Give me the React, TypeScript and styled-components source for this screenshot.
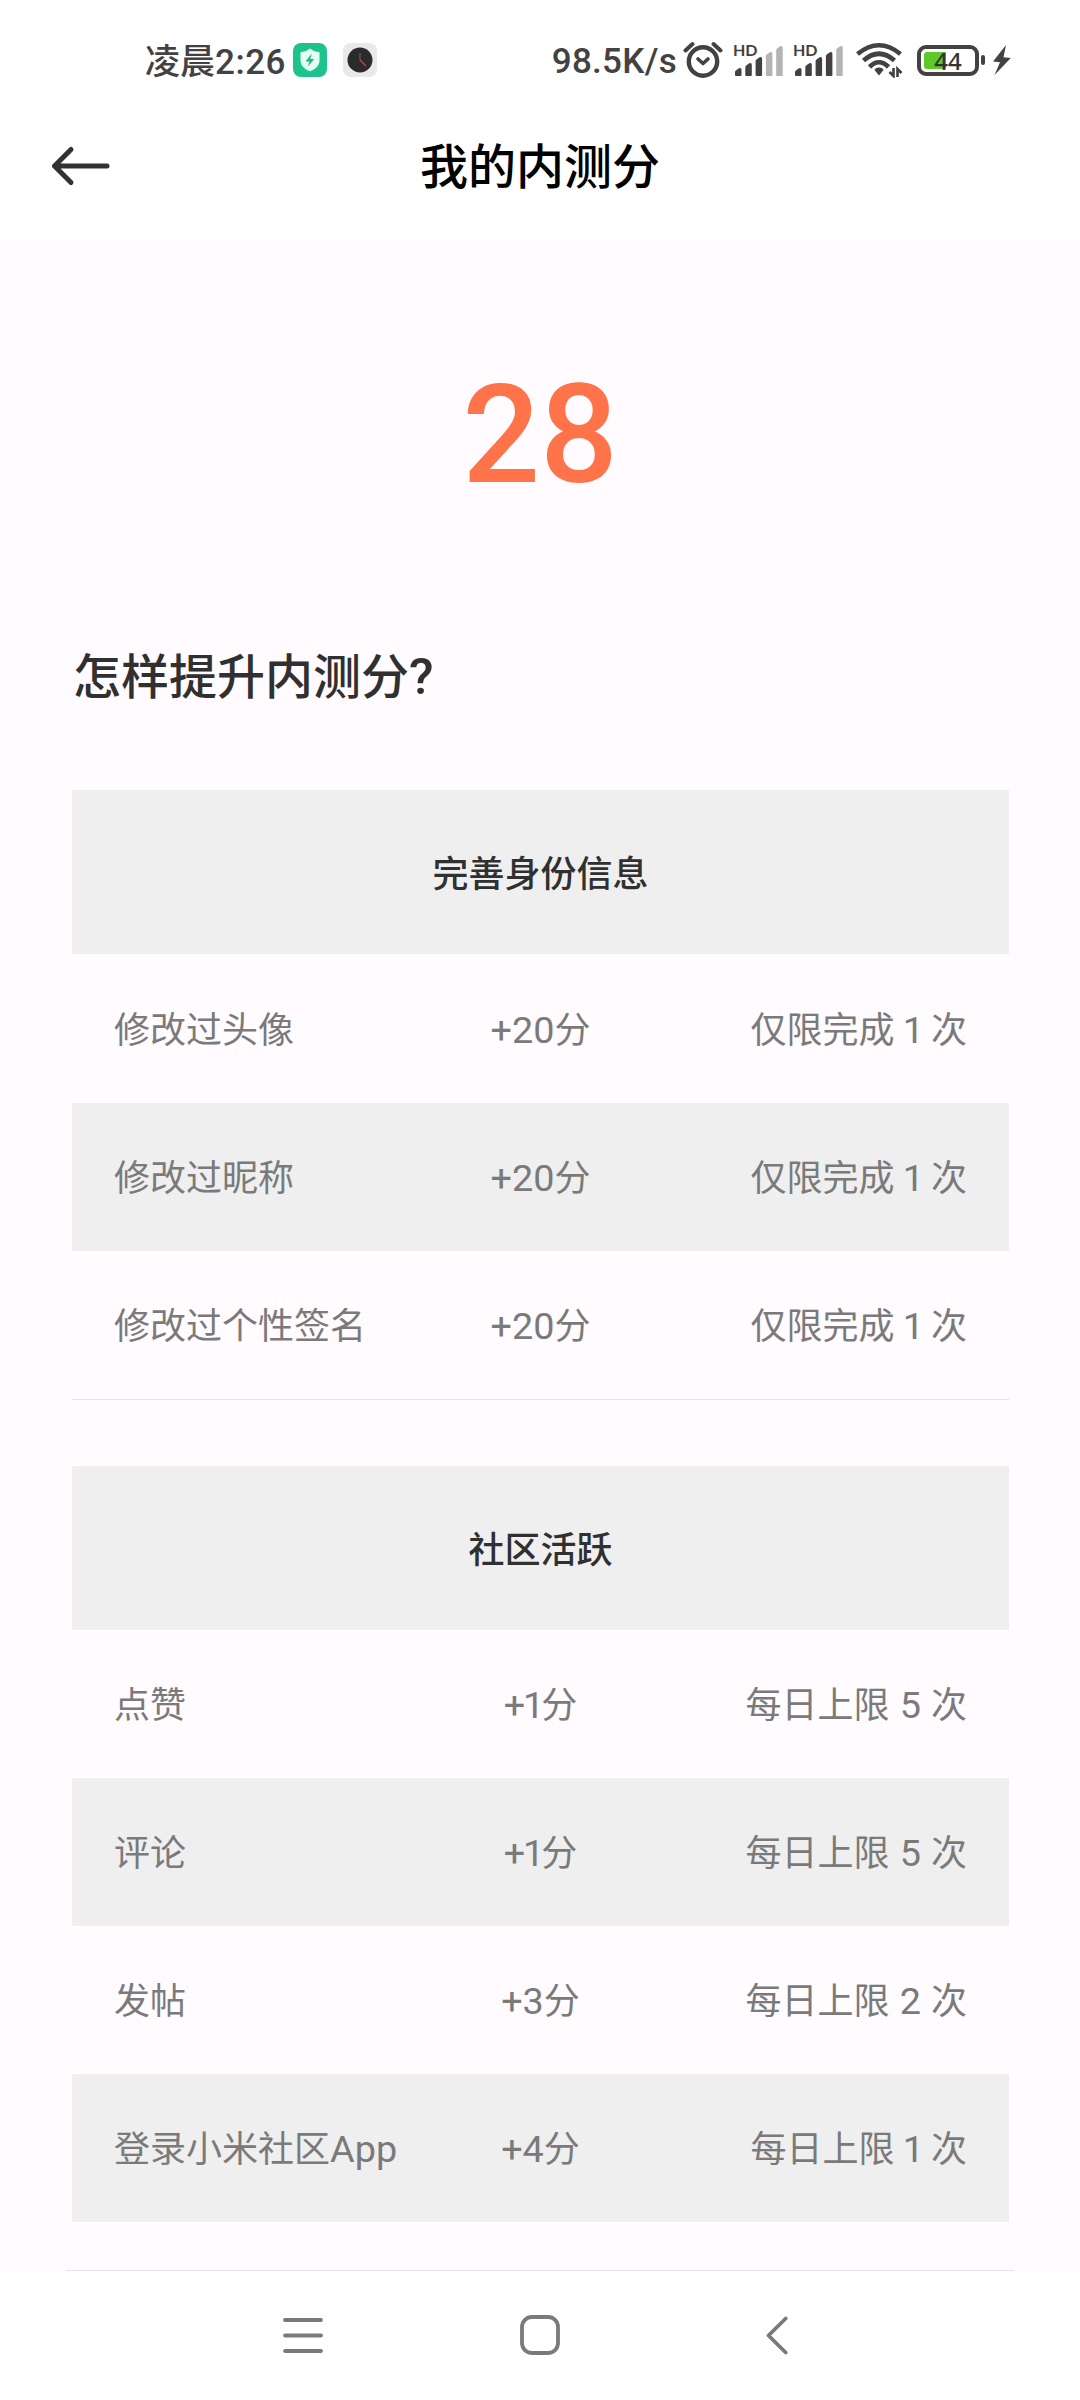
import React from 'react';
import styled, { createGlobalStyle } from 'styled-components';

const Global = createGlobalStyle`
  * { box-sizing: border-box; }
  html, body { margin: 0; background: #ffffff; }
  svg { display: block; flex: none; }
`;

const Screen = styled.div`
  display: flex;
  flex-direction: column;
  width: 1080px;
  height: 2400px;
  overflow: hidden;
  background: #ffffff;
  font-family: 'Noto Sans CJK SC', sans-serif;
  color: #303030;
`;

const StatusBar = styled.header`
  display: flex;
  align-items: center;
  height: 120px;
  padding: 0 69px 0 145px;
  font-size: 35px;
  line-height: 40px;
  font-weight: 500;
  color: #424242;
  white-space: nowrap;
`;

const Clock = styled.span`
  width: 148px;
  padding-bottom: 2px;
`;

const Spacer = styled.span`
  flex: 1;
`;

const Speed = styled.span`
  display: flex;
  justify-content: flex-end;
  margin-right: 6px;
  padding-top: 2px;
`;

const Latin = styled.span<{ $size?: number; $spacing?: number }>`
  font-family: Roboto, 'Noto Sans CJK SC', sans-serif;
  font-size: ${p => p.$size ?? 1.05}em;
  letter-spacing: ${p => p.$spacing ?? 0}px;
  line-height: 1;
`;

const NarrowOne = styled(Latin)`
  margin: 0 -3px 0 -2px;
`;

const TitleBar = styled.div`
  display: grid;
  grid-template-columns: 160px 1fr 160px;
  align-items: center;
  height: 120px;
  padding-bottom: 28px;
`;

const BackButton = styled.button`
  border: 0;
  background: none;
  padding: 0 0 0 50px;
`;

const Title = styled.h1`
  margin: 0;
  padding-bottom: 7px;
  text-align: center;
  font-size: 48px;
  line-height: 60px;
  font-weight: 500;
  color: #000000;
`;

const Content = styled.main`
  display: flex;
  flex-direction: column;
  height: 2030px;
  background: #fffbff;
  overflow: hidden;
`;

const Score = styled.div`
  height: 386px;
  flex: none;
  padding-top: 115px;
  text-align: center;
  font-family: Roboto, sans-serif;
  font-size: 137px;
  line-height: 160px;
  font-weight: 500;
  color: #ff734b;
`;

const Question = styled.h2`
  margin: 0 0 0 73px;
  height: 164px;
  flex: none;
  padding-top: 17px;
  font-size: 48px;
  line-height: 60px;
  font-weight: 500;
`;

const Table = styled.section<{ $gap: number }>`
  width: 937px;
  margin: 0 0 66px 72px;
  display: flex;
  flex-direction: column;
  flex: none;
  & > :first-child { margin-bottom: ${p => p.$gap}px; }
`;

const TableHead = styled.h3`
  margin: 0;
  height: 164px;
  padding-bottom: 2px;
  display: flex;
  align-items: center;
  justify-content: center;
  background: #efefef;
  font-size: 36px;
  line-height: 54px;
  font-weight: 500;
`;

const Row = styled.div<{ $shaded: boolean }>`
  display: grid;
  grid-template-columns: 1fr 180px 1fr;
  align-items: center;
  height: 148px;
  padding: 0 42px 4px;
  background: ${p => (p.$shaded ? '#efefef' : 'transparent')};
  font-size: 36px;
  line-height: 54px;
  color: #7a7a7a;
  white-space: nowrap;
`;

const Cell = styled.span<{ $align?: string }>`
  text-align: ${p => p.$align ?? 'left'};
  word-spacing: 2px;
`;

const TableEnd = styled.div`
  height: 1px;
  background: #e4e2e5;
`;

const NavDivider = styled.div`
  height: 1px;
  margin: 0 66px;
  background: #e6e2e6;
`;

const NavBar = styled.nav`
  display: flex;
  justify-content: center;
  gap: 197px;
  padding-top: 44px;
`;

/* Splits a label into CJK and Latin runs so digits get their own face. */
const Mixed = ({ text, size, spacing }: { text: string; size?: number; spacing?: number }) => (
  <>
    {text.split(/(1|[A-Za-z02-9+?:./]+)/).map((part, i) => {
      if (i % 2 === 0) return part;
      const Run = part === '1' ? NarrowOne : Latin;
      return <Run key={i} $size={size} $spacing={spacing}>{part}</Run>;
    })}
  </>
);

const ShieldApp = () => (
  <svg width="34" height="34" viewBox="0 0 34 34">
    <rect width="34" height="34" rx="8" fill="#1cc48b" />
    <path d="M17 5.5c3 2.4 6 3.4 9.5 3.7v8.3c0 5.200-4 8.800-9.500 10.800-5.500-2-9.500-5.600-9.500-10.800V9.200C11 8.900 14 7.900 17 5.500z" fill="#e4fff4" />
    <path d="M18.800 10.500l-6.300 8h3.900l-1.400 5 6.200-7.500h-4z" fill="#1cb583" />
  </svg>
);

const ClockApp = () => (
  <svg width="34" height="34" viewBox="0 0 34 34">
    <rect width="34" height="34" rx="8" fill="#ebe8e9" />
    <circle cx="17" cy="17" r="12.500" fill="#2b2b2b" />
    <path d="M17 10v7" stroke="#555" strokeWidth="1.500" />
    <path d="M17 17l6 6" stroke="#b5483f" strokeWidth="1.500" />
  </svg>
);

const Alarm = () => (
  <svg width="40" height="38" viewBox="0 0 40 38" fill="none" stroke="#424242" strokeLinecap="round" strokeLinejoin="round">
    <circle cx="20" cy="20.500" r="14.200" strokeWidth="4.400" />
    <path d="M15 18l5 4.500 5-4.500" strokeWidth="3.600" />
    <path d="M2.500 9.500l7-6.500M37.500 9.500l-7-6.500" strokeWidth="4" />
  </svg>
);

const SignalBox = styled.span`
  position: relative;
  width: 50px;
  height: 34px;
`;

const HdTag = styled.span`
  position: absolute;
  left: 0;
  top: -2px;
  font: 700 16px/17px Lato, sans-serif;
`;

const Signal = ({ strong }: { strong: number }) => (
  <SignalBox>
    <HdTag>HD</HdTag>
    <svg width="50" height="34" viewBox="0 0 50 34">
      {[8, 13, 19, 24, 30].map((h, i) => (
        <path
          key={h}
          d={`M${2 + i * 10.300} ${33 - h + 4} q0 -1 1.500 -2 l2.500 -1.700 q2.500 -.8 2.500 1.500 V32 q0 1 -1 1 h-4.500 q-1 0 -1 -1z`}
          fill={i < strong ? '#424242' : '#b5b3b5'}
        />
      ))}
    </svg>
  </SignalBox>
);

const Wifi = () => (
  <svg width="47" height="36" viewBox="0 0 47 36" fill="none" stroke="#424242" strokeWidth="4.600">
    <path d="M1.500 12Q23 -5.500 44.500 12" />
    <path d="M7.500 18.500Q23 5 38.500 18.500" />
    <path d="M13.500 25Q23 15.500 32.500 25" />
    <path d="M23 25.500c2.600 0 4 1 4.500 2.500L23 33.500l-4.500-5.500c.5-1.500 2-2.500 4.500-2.500z" fill="#424242" stroke="none" />
    <path d="M37.500 26v8l-4-4M41.500 35v-8l4 4" strokeWidth="2.600" />
  </svg>
);

const BatteryShell = styled.span`
  position: relative;
  width: 62px;
  height: 31px;
  border: 4.500px solid #424242;
  border-radius: 9px;
  padding: 3px;
  display: flex;
`;

const BatteryFill = styled.span`
  width: 22px;
  border-radius: 3px 0 0 3px;
  background: #5fc726;
`;

const BatteryText = styled.span`
  position: absolute;
  inset: 0;
  text-align: center;
  font: 500 24px/23px 'Noto Sans', sans-serif;
  color: #333333;
`;

const BatteryTip = styled.span`
  width: 4px;
  height: 10px;
  margin: 0 8px 0 2px;
  border-radius: 2px;
  background: #424242;
`;

const Bolt = () => (
  <svg width="18" height="30" viewBox="0 0 18 30">
    <path d="M13 0L0 16.500l7 .8-5.500 12.700L17.800 13 10.500 12.200z" fill="#424242" />
  </svg>
);

const Icons = styled.span<{ $gap: number; $left?: number }>`
  display: flex;
  align-items: center;
  gap: ${p => p.$gap}px;
  margin-left: ${p => p.$left ?? 0}px;
`;

interface Rule { name: string; points: string; limit: string }

const profileRules: Rule[] = [
  { name: '修改过头像', points: '+20分', limit: '仅限完成 1 次' },
  { name: '修改过昵称', points: '+20分', limit: '仅限完成 1 次' },
  { name: '修改过个性签名', points: '+20分', limit: '仅限完成 1 次' },
];

const activityRules: Rule[] = [
  { name: '点赞', points: '+1分', limit: '每日上限 5 次' },
  { name: '评论', points: '+1分', limit: '每日上限 5 次' },
  { name: '发帖', points: '+3分', limit: '每日上限 2 次' },
  { name: '登录小米社区App', points: '+4分', limit: '每日上限 1 次' },
];

const RuleTable = ({ title, rules, gap, closed }: { title: string; rules: Rule[]; gap: number; closed?: boolean }) => (
  <Table $gap={gap}>
    <TableHead>{title}</TableHead>
    {rules.map((r, i) => (
      <Row key={r.name} $shaded={i % 2 === 1}>
        <Cell><Mixed text={r.name} /></Cell>
        <Cell $align="center"><Mixed text={r.points} /></Cell>
        <Cell $align="right"><Mixed text={r.limit} /></Cell>
      </Row>
    ))}
    {closed && <TableEnd />}
  </Table>
);

export default function App() {
  return (
    <Screen>
      <Global />
      <StatusBar>
        <Clock><Mixed text="凌晨2:26" size={1} spacing={0.5} /></Clock>
        <Icons $gap={16}><ShieldApp /><ClockApp /></Icons>
        <Spacer />
        <Speed><Latin $size={1} $spacing={0.3}>98.5K/s</Latin></Speed>
        <Alarm />
        <Icons $gap={10} $left={10}><Signal strong={3} /><Signal strong={4} /></Icons>
        <Icons $gap={14} $left={13}><Wifi /><BatteryShell><BatteryFill /><BatteryText>44</BatteryText></BatteryShell></Icons>
        <BatteryTip />
        <Bolt />
      </StatusBar>
      <TitleBar>
        <BackButton aria-label="返回">
          <svg width="62" height="44" viewBox="0 0 62 44" fill="none" stroke="#303332" strokeWidth="5" strokeLinecap="round" strokeLinejoin="round">
            <path d="M57 22H4.500M21 5.500L4.500 22 21 38.500" />
          </svg>
        </BackButton>
        <Title>我的内测分</Title>
      </TitleBar>
      <Content>
        <Score>28</Score>
        <Question><Mixed text="怎样提升内测分?" /></Question>
        <RuleTable title="完善身份信息" rules={profileRules} gap={1} closed />
        <RuleTable title="社区活跃" rules={activityRules} gap={0} />
      </Content>
      <NavDivider />
      <NavBar>
        <svg width="40" height="40" viewBox="0 0 40 40" stroke="#7a7a7a" strokeWidth="3.800" strokeLinecap="round">
          <path d="M2 5h36M2 20.500h36M2 36h36" />
        </svg>
        <svg width="40" height="40" viewBox="0 0 40 40" fill="none" stroke="#7a7a7a" strokeWidth="3.800">
          <rect x="2" y="2" width="36" height="36" rx="10" />
        </svg>
        <svg width="40" height="40" viewBox="0 0 40 40" fill="none" stroke="#7a7a7a" strokeWidth="3.800" strokeLinecap="round" strokeLinejoin="round">
          <path d="M28.700 3.500L11.500 20.500 28.700 37.500" />
        </svg>
      </NavBar>
    </Screen>
  );
}
